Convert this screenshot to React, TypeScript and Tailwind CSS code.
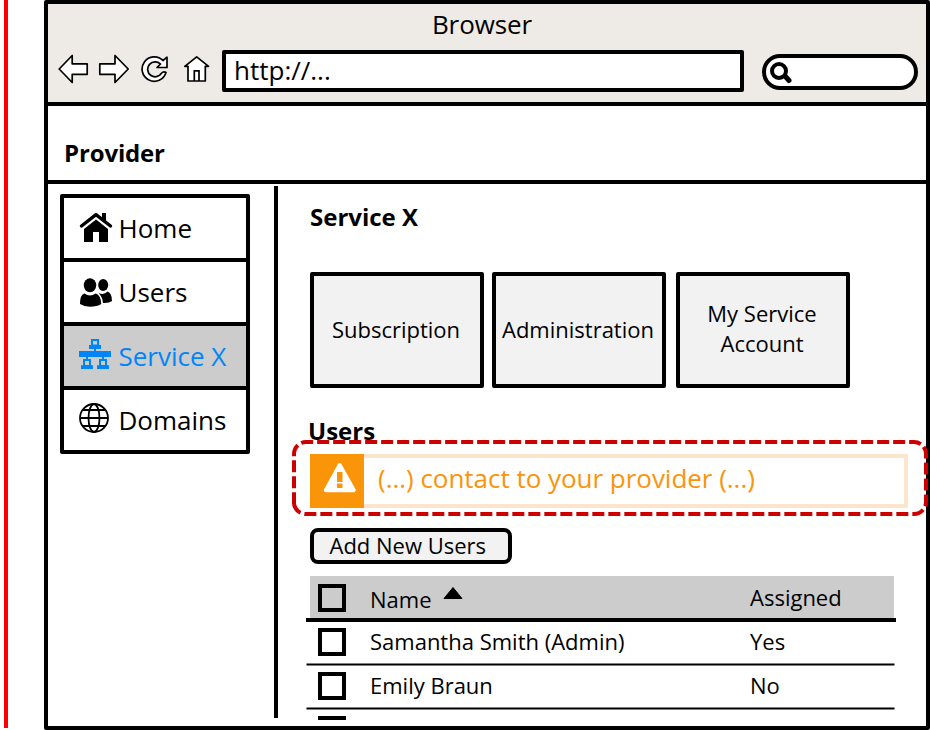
import type { ReactNode } from "react";

const icon = { fill: "none", stroke: "#000", strokeWidth: 1.7 };

function BackIcon() {
  return (
    <svg width="32" height="32" viewBox="58 53 32 32">
      <path d="M59.200 69 L72.200 55.500 V63.800 H87.200 V74.300 H72.200 V82.500 Z" {...icon} fill="#fff" strokeLinejoin="round" />
    </svg>
  );
}

function ForwardIcon() {
  return (
    <svg width="32" height="32" viewBox="98 53 32 32">
      <path d="M128.200 69 L115 55.500 V63.800 H99.800 V74.300 H115 V82.500 Z" {...icon} fill="#fff" strokeLinejoin="round" />
    </svg>
  );
}

function ReloadIcon() {
  return (
    <svg width="28" height="30" viewBox="141 54 28 30">
      <path
        d="M167 57.200 V67.500 H157 L160.500 64 A7.500 7.500 0 1 0 161.500 73.300 Q163.500 71 166 72.500 A12.200 12.200 0 1 1 163 60.500 Z"
        {...icon}
        fill="#fff"
        strokeLinejoin="round"
      />
    </svg>
  );
}

function HouseOutlineIcon() {
  return (
    <svg width="28" height="28" viewBox="183 55 28 28">
      <path d="M184.800 66.300 L196.700 56.800 L208.600 66.300 H205.300 V81 H188 V66.300 Z" {...icon} fill="#fff" strokeLinejoin="round" />
      <path d="M194.300 81 V70.800 H199 V81" {...icon} />
    </svg>
  );
}

function SearchIcon() {
  return (
    <svg width="24" height="24" viewBox="768 60 24 24">
      <circle cx="779" cy="71" r="7" fill="none" stroke="#000" strokeWidth="4" />
      <path d="M785 76 L789 80.500" stroke="#000" strokeWidth="5" strokeLinecap="round" />
    </svg>
  );
}

function HomeIcon() {
  return (
    <svg width="36" height="32" viewBox="78 210 36 32">
      <path d="M81.500 226 L96 214.700 L110.500 226" fill="none" stroke="#000" strokeWidth="3.400" strokeLinecap="round" strokeLinejoin="round" />
      <path d="M102 213 H106 V222 L102 219 Z" />
      <path d="M84 229 L96 219.500 L108 229 V242 H99 V232 H93 V242 H84 Z" />
    </svg>
  );
}

function UsersIcon() {
  return (
    <svg width="36" height="34" viewBox="78 274 36 34">
      <ellipse cx="90" cy="285.300" rx="6.200" ry="7" />
      <ellipse cx="103.200" cy="285" rx="5" ry="6" />
      <path d="M80 304 Q80 294.500 84.500 293.500 Q90 297.500 95.500 293.500 Q100.500 294.500 101.300 304 Q97 306.700 90 306.700 Q84 306.700 80 304 Z" />
      <path d="M98.500 293 Q104 295.500 107.500 291.500 Q112 293 112 301 Q109 303.500 103 303 Q102.500 297 98.500 293 Z" />
    </svg>
  );
}

function NetworkIcon() {
  return (
    <svg width="34" height="32" viewBox="78 338 34 32" fill="#0085f9">
      <path d="M79 351 H111 V357 H79 Z M89 345 H101 V349 H89 Z M94 348 H96 V352 H94 Z M81 365.300 H93 V369 H81 Z M97 365.300 H109 V369 H97 Z M86 356 H88 V360 H86 Z M102 356 H104 V360 H102 Z" />
      <path d="M92 340 H98 V345.500 H92 Z M84 360 H90 V366 H84 Z M100 360 H106 V366 H100 Z" fill="none" stroke="#0085f9" strokeWidth="2" />
    </svg>
  );
}

function GlobeIcon() {
  return (
    <svg width="34" height="32" viewBox="78 402 34 32" fill="none" stroke="#000" strokeWidth="1.800">
      <circle cx="94" cy="418" r="14" />
      <ellipse cx="94" cy="418" rx="5.500" ry="14" />
      <path d="M80 418 H108 M82.500 410 H105.500 M82.500 426 H105.500" />
    </svg>
  );
}

function NavItem({ icon, label, active, last }: { icon: ReactNode; label: string; active?: boolean; last?: boolean }) {
  return (
    <a
      className={`flex h-16 items-start pl-[14px] ${last ? "" : "border-b-4 border-black"} ${active ? "bg-[#ccc] text-[#0085f9]" : "bg-white"}`}
    >
      <span className="mt-[12px] flex w-[40.500px] shrink-0">{icon}</span>
      <span className="mt-[12px] text-[26px] leading-[36px]">{label}</span>
    </a>
  );
}

function Card({ children, className = "" }: { children: ReactNode; className?: string }) {
  return (
    <div
      className={`flex h-[116px] w-[174px] items-center justify-center rounded-xs border-4 border-black bg-[#f2f2f2] pr-[2px] text-center text-[22px] leading-[30px] whitespace-nowrap ${className}`}
    >
      {children}
    </div>
  );
}

function Checkbox() {
  return <span className="block size-7 shrink-0 border-4 border-black" />;
}

function Row({ name, assigned }: { name: string; assigned: string }) {
  return (
    <div className="h-11">
      <div className="flex h-[34px] pt-[6px] pl-3">
        <Checkbox />
        <span className="-mt-[2px] ml-6 w-[380px] text-[22px] leading-[30px]">{name}</span>
        <span className="-mt-[2px] text-[22px] leading-[30px]">{assigned}</span>
      </div>
      <svg className="mt-[6px] block" width="590" height="4">
        <line x1="0.500" x2="588.500" y1="2.500" y2="2.500" stroke="#000" strokeWidth="2" />
      </svg>
    </div>
  );
}

export default function App() {
  return (
    <div className="flex h-[730px] w-[930px] overflow-hidden bg-white pl-1 font-['Open_Sans',sans-serif] text-black">
      <div className="h-[728px] w-1 shrink-0 bg-[#f00]" />
      <div className="ml-9 flex h-[730px] w-[886px] shrink-0 flex-col rounded-[2px] border-4 border-black">
        <header className="h-[102px] shrink-0 border-b-4 border-black bg-[#eeebe7]">
          <div className="h-[46px] pt-[2px] pr-[10px] text-center text-[26px] leading-[36px] tracking-[-0.1px]">Browser</div>
          <div className="flex h-[42px] items-start">
            <div className="flex h-[42px] w-[174px] pt-[3px] pl-[10px]">
              <BackIcon />
              <span className="ml-2 flex"><ForwardIcon /></span>
              <span className="mt-px ml-[11px] flex h-[30px]"><ReloadIcon /></span>
              <span className="mt-[2px] ml-[14px] flex h-7"><HouseOutlineIcon /></span>
            </div>
            <div className="h-[42px] w-[522px] shrink-0 rounded-xs border-4 border-black bg-white pl-2 text-[26px] leading-[32px]">
              http://...
            </div>
            <div className="mt-1 ml-[18px] flex h-9 w-[156px] shrink-0 rounded-[18px] border-4 border-black bg-white pt-[2px] pl-[2px]">
              <SearchIcon />
            </div>
          </div>
        </header>

        <div className="h-[78px] shrink-0 border-b-4 border-black pt-[30px] pl-4 text-[24px] leading-[34px] font-bold tracking-[-0.15px]">Provider</div>

        <div className="flex h-[542px]">
          <nav className="mt-[10px] ml-3 h-[260px] w-[190px] shrink-0 overflow-hidden rounded-xs border-4 border-black">
            <NavItem icon={<HomeIcon />} label="Home" />
            <NavItem icon={<UsersIcon />} label="Users" />
            <NavItem icon={<NetworkIcon />} label="Service X" active />
            <NavItem icon={<GlobeIcon />} label="Domains" last />
          </nav>
          <div className="mt-[2px] ml-6 h-[532px] w-1 shrink-0 bg-black" />

          <main className="ml-7 h-[536px] w-[590px] shrink-0 overflow-visible">
            <h1 className="h-[88px] pt-[16px] pl-1 text-[24px] leading-[34px] font-bold">Service X</h1>
            <div className="flex pl-1">
              <Card className="pb-[2px]">Subscription</Card>
              <Card className="ml-2 pb-[2px]">Administration</Card>
              <Card className="ml-[10px] pb-1">
                My Service
                <br />
                Account
              </Card>
            </div>
            <h2 className="h-[66px] pt-[26px] pl-[2px] text-[24px] leading-[34px] font-bold">Users</h2>

            <div className="relative ml-1 flex h-[54px] w-[598px] rounded-xs">
              <div className="flex w-[54px] shrink-0 bg-[#fa9409]">
                <svg width="54" height="54" viewBox="310 454 54 54">
                  <path d="M339.700 465 L353.800 490.300 H325.800 Z" fill="#fff" stroke="#fff" strokeWidth="4" strokeLinejoin="round" />
                  <path d="M337 472 H342.500 V482 H337 Z M337 483.500 H342.500 V488 H337 Z" fill="#fa9409" />
                </svg>
              </div>
              <div className="flex-1 rounded-r-xs border-4 border-l-0 border-[#fce5cd] bg-white pl-[14px] text-[26px] leading-[40px] tracking-[-0.03px] text-[#fa9409]">
                (...) contact to your provider (...)
              </div>
              <svg className="absolute -top-[14px] -left-[18px]" width="636" height="76">
                <path
                  d="M2 64.150 V14 A12 12 0 0 1 14 2 H622 A12 12 0 0 1 634 14 V62 A12 12 0 0 1 622 74 H14 A12 12 0 0 1 2 64.150"
                  fill="none"
                  stroke="#c00"
                  strokeWidth="4"
                  strokeDasharray="12 4"
                />
              </svg>
            </div>

            <button className="mt-5 ml-1 block h-9 w-[202px] rounded-[8px] border-4 border-black bg-[#f2f2f2] pb-[2px] pl-[15.500px] text-left text-[22px] leading-[26px]">
              Add New Users
            </button>

            <div className="mt-3 h-[144px] overflow-hidden">
              <div className="ml-1 flex h-[42px] w-[584px] bg-[#ccc] pt-2 pl-2">
                <Checkbox />
                <span className="ml-6 flex w-[380px] text-[22px] leading-[30px]">
                  <span>Name</span>
                  <svg className="mt-[2px] ml-[10px]" width="22" height="14">
                    <path d="M11 1.500 L20 12.500 H2 Z" stroke="#000" strokeWidth="1" strokeLinejoin="round" />
                  </svg>
                </span>
                <span className="-mt-[2px] text-[22px] leading-[30px]">Assigned</span>
              </div>
              <div className="h-1 bg-black" />
              <Row name="Samantha Smith (Admin)" assigned="Yes" />
              <Row name="Emily Braun" assigned="No" />
              <div className="pt-[6px] pl-3">
                <Checkbox />
              </div>
            </div>
          </main>
        </div>
      </div>
    </div>
  );
}
